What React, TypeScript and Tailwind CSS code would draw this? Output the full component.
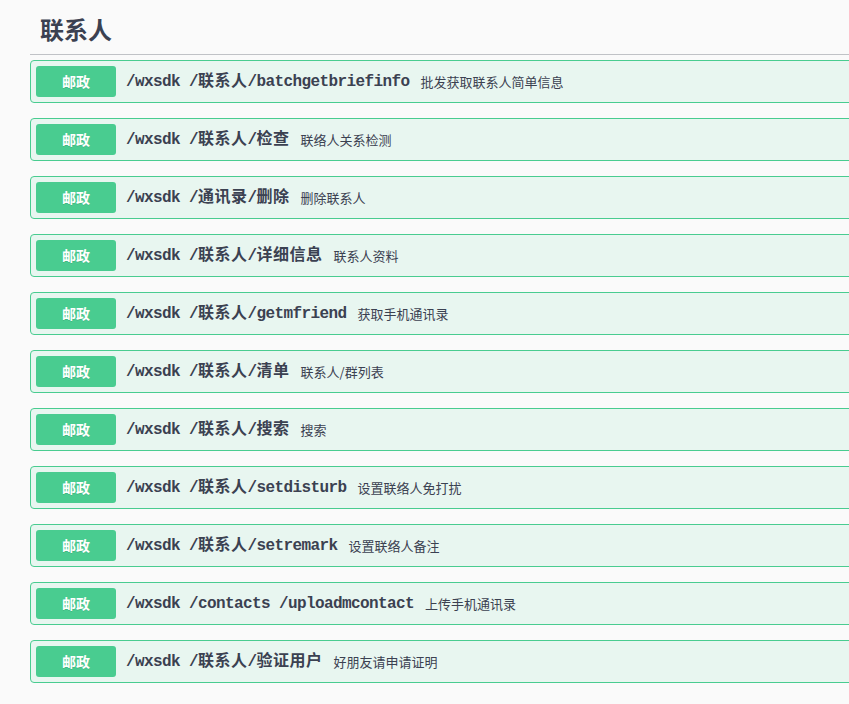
const ops = [
  { path: "/wxsdk /联系人/batchgetbriefinfo", desc: "批发获取联系人简单信息" },
  { path: "/wxsdk /联系人/检查", desc: "联络人关系检测" },
  { path: "/wxsdk /通讯录/删除", desc: "删除联系人" },
  { path: "/wxsdk /联系人/详细信息", desc: "联系人资料" },
  { path: "/wxsdk /联系人/getmfriend", desc: "获取手机通讯录" },
  { path: "/wxsdk /联系人/清单", desc: "联系人/群列表" },
  { path: "/wxsdk /联系人/搜索", desc: "搜索" },
  { path: "/wxsdk /联系人/setdisturb", desc: "设置联络人免打扰" },
  { path: "/wxsdk /联系人/setremark", desc: "设置联络人备注" },
  { path: "/wxsdk /contacts /uploadmcontact", desc: "上传手机通讯录" },
  { path: "/wxsdk /联系人/验证用户", desc: "好朋友请申请证明" },
];

// CJK runs are a bit wider in the original than the latin mono glyphs
function PathText({ path }: { path: string }) {
  const parts = path.split(/([\u4e00-\u9fff]+)/);
  return (
    <>
      {parts.map((p, i) =>
        i % 2 === 1 ? (
          <span key={i} className="tracking-[0.5px]">
            {p}
          </span>
        ) : (
          <span key={i}>{p}</span>
        ),
      )}
    </>
  );
}

function OpRow({ path, desc }: { path: string; desc: string }) {
  return (
    <div className="mb-[15px] flex items-center rounded-[4px] border border-[#49cc90] bg-[#e8f6f0] p-[5px]">
      <span className="flex h-[31px] w-[80px] shrink-0 items-center justify-center rounded-[3px] bg-[#49cc90] text-[14px] font-bold text-white [text-shadow:0_1px_0_rgba(0,0,0,0.1)] [font-family:'Noto_Sans_CJK_SC',sans-serif]">
        邮政
      </span>
      <span className="pl-[10px] pr-[11px] text-[16px] font-bold tracking-[-0.6px] text-[#3b4151] [font-family:'Liberation_Mono','Noto_Sans_CJK_SC',monospace]">
        <PathText path={path} />
      </span>
      <span className="text-[13px] text-[#3b4151] [font-family:'Noto_Sans_CJK_SC',sans-serif]">
        {desc}
      </span>
    </div>
  );
}

export default function App() {
  return (
    <div className="min-h-screen w-full overflow-hidden bg-[#fafafa]">
      <div className="w-[900px] pl-[30px]">
        {/* Tag header */}
        <h3 className="mb-[5px] border-b border-[rgba(59,65,81,0.3)] pl-[10px] pb-[10px] pt-[14px] text-[24px] font-bold leading-[30px] text-[#3b4151] [font-family:'Noto_Sans_CJK_SC',sans-serif]">
          联系人
        </h3>

        {/* Operations */}
        <div>
          {ops.map((op) => (
            <OpRow key={op.path} path={op.path} desc={op.desc} />
          ))}
        </div>
      </div>
    </div>
  );
}
